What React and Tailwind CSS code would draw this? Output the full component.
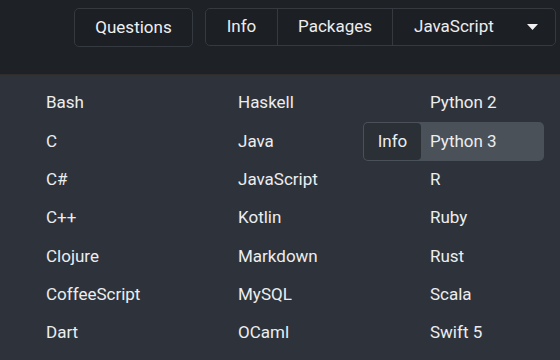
import React from "react";

const columns = [
  ["Bash", "C", "C#", "C++", "Clojure", "CoffeeScript", "Dart"],
  ["Haskell", "Java", "JavaScript", "Kotlin", "Markdown", "MySQL", "OCaml"],
  ["Python 2", "Python 3", "R", "Ruby", "Rust", "Scala", "Swift 5"],
];

const App = () => {
  return (
    <div className="w-[560px] h-[360px] overflow-hidden bg-[#2e333b] text-[17px] text-[#ecedef] font-['Roboto',sans-serif]">
      <div className="h-[75px] bg-[#1e2126] border-b border-[#2f2e2b] flex justify-end items-start pt-2 pr-1">
        <button className="w-[119px] h-[39px] mr-3 rounded-[5px] border border-[#353940] bg-[#1c1f24] text-[#eef0f2]">
          Questions
        </button>
        <div className="flex h-[38px] rounded-[5px] border border-[#353940] bg-[#1c1f24]">
          <span className="w-[72px] flex items-center justify-center border-r border-[#353940]">Info</span>
          <span className="w-[115px] flex items-center justify-center border-r border-[#353940]">Packages</span>
          <span className="w-[162px] flex items-center pl-[21px] relative">
            JavaScript
            <svg className="absolute right-[17px] top-[15px]" width="11" height="6" viewBox="0 0 11 6">
              <path d="M0 0h11L5.5 6z" fill="#f2f2f2" />
            </svg>
          </span>
        </div>
      </div>
      <div className="grid grid-cols-[192px_192px_176px] pl-[46px] pt-[9px]">
        {columns.map((col, ci) => (
          <div key={ci} className="flex flex-col">
            {col.map((name) => (
              <div key={name} className="h-[38.33px] flex items-center relative">
                {name === "Python 3" && (
                  <div className="absolute left-[-67px] top-0 w-[181px] h-[39px] rounded-[5px] bg-[#4a5158] p-px flex">
                    <span className="w-[57px] rounded-[4px] bg-[#2b3037] flex items-center justify-center">Info</span>
                  </div>
                )}
                <span className="relative">{name}</span>
              </div>
            ))}
          </div>
        ))}
      </div>
    </div>
  );
};

export default App;
